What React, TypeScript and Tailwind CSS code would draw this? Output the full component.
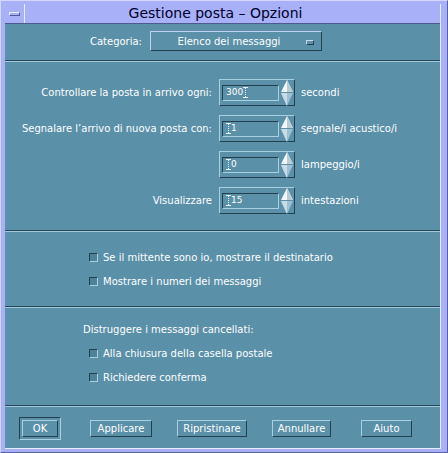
const raised = "border-t border-l border-t-[#a8d0e0] border-l-[#a8d0e0] border-b border-r border-b-[#22404e] border-r-[#22404e]";
const sunken = "border-t border-l border-t-[#22404e] border-l-[#22404e] border-b border-r border-b-[#a8d0e0] border-r-[#a8d0e0]";

const Separator = () => (
  <div className="flex flex-col">
    <div className="h-px bg-[#28485a]" />
    <div className="h-px bg-[#a0c8d8]" />
  </div>
);

const Cursor = () => (
  <span className="inline-flex flex-col items-center w-[5px] h-[11px] align-middle">
    <span className="w-[5px] h-px bg-[#f0f0f0]" />
    <span className="w-px flex-1 border-l border-dotted border-[#f0f0f0]" />
    <span className="w-[5px] h-px bg-[#f0f0f0]" />
  </span>
);

const Arrows = () => (
  <svg width="12" height="26" viewBox="0 0 12 26" className="shrink-0">
    <polygon points="6,0 12,12 0,12" fill="#f4f8fa" />
    <polygon points="6,0 12,12 6,12" fill="#b8ccd6" />
    <polygon points="0,13 12,13 6,26" fill="#9cc0d2" />
    <polygon points="0,13 6,13 6,26" fill="#c8dce6" />
  </svg>
);

const SpinRow = ({
  label,
  value,
  unit,
  cursor,
}: {
  label: string;
  value: string;
  unit: string;
  cursor: "before" | "after";
}) => (
  <div className="flex items-center h-[27px]">
    <div className="w-[207px] text-right text-white">{label}</div>
    <div className={`ml-[7px] w-[76px] h-[27px] flex items-center pl-[2px] pr-[1px] ${raised}`}>
      <div className={`w-[58px] h-[16px] flex items-center pl-[3px] text-[9px] text-white ${sunken}`}>
        {cursor === "before" && <Cursor />}
        <span>{value}</span>
        {cursor === "after" && <Cursor />}
      </div>
      <div className="ml-[2px]">
        <Arrows />
      </div>
    </div>
    <div className="ml-[6px] text-white">{unit}</div>
  </div>
);

const Check = ({ label }: { label: string }) => (
  <div className="flex items-center h-[24px] pl-[84px]">
    <div className={`w-[9px] h-[9px] bg-[#4f8299] ${sunken}`} />
    <span className="ml-[5px] text-white">{label}</span>
  </div>
);

const Btn = ({ label, w, className = "" }: { label: string; w: string; className?: string }) => (
  <div className={`${w} h-[17px] flex items-center justify-center text-white ${raised} ${className}`}>
    {label}
  </div>
);

export default function App() {
  return (
    <div
      className="w-[448px] h-[453px] bg-[#a8b0f8] border border-t-[#d4d8ff] border-l-[#d4d8ff] border-b-[#5860a0] border-r-[#5860a0] pt-[3px] pl-[4px] pr-[6px] pb-[3px] flex flex-col text-[10px]"
      style={{ fontFamily: '"DejaVu Sans", "Liberation Sans", sans-serif' }}
    >
      <div className="flex-1 flex flex-col border-r border-b border-r-[#e8ecff] border-b-[#e8ecff]">
        {/* title bar */}
        <div className="h-[20px] flex border-b border-[#505890] shrink-0">
          <div className="w-[20px] flex items-center justify-center border-r border-[#e8ecff]">
            <div className="w-[11px] h-[4px] border-t border-l border-[#eef0ff] border-b border-r border-b-[#50589a] border-r-[#50589a]" />
          </div>
          <div className="flex-1 flex items-center justify-center pr-[34px] text-[14px] text-[#000028]">
            Gestione posta – Opzioni
          </div>
        </div>

        {/* content */}
        <div className="flex-1 bg-[#5a90a8] flex flex-col">
          <div className="h-[36px] pt-[7px] flex items-start shrink-0">
            <div className="w-[137px] h-[20px] flex items-center justify-end text-white">Categoria:</div>
            <div className="ml-[8px] w-[172px] h-[20px] flex items-center border border-t-[#c4ccf8] border-l-[#c4ccf8] border-b-[#22404e] border-r-[#22404e] text-white relative">
              <span className="flex-1 text-center pr-[14px]">Elenco dei messaggi</span>
              <div className="absolute right-[7px] top-[8px] w-[8px] h-[5px] bg-[#5a90a8] border border-t-[#c8dcf0] border-l-[#c8dcf0] border-b-[#22404e] border-r-[#22404e]" />
            </div>
          </div>
          <Separator />

          <div className="h-[168px] pt-[17px] flex flex-col gap-[9px] shrink-0">
            <SpinRow label="Controllare la posta in arrivo ogni:" value="300" unit="secondi" cursor="after" />
            <SpinRow label="Segnalare l’arrivo di nuova posta con:" value="1" unit="segnale/i acustico/i" cursor="before" />
            <SpinRow label="" value="0" unit="lampeggio/i" cursor="before" />
            <SpinRow label="Visualizzare" value="15" unit="intestazioni" cursor="before" />
          </div>
          <Separator />

          <div className="h-[74px] pt-[13px] flex flex-col shrink-0">
            <Check label="Se il mittente sono io, mostrare il destinatario" />
            <Check label="Mostrare i numeri dei messaggi" />
          </div>
          <Separator />

          <div className="h-[97px] pt-[9px] flex flex-col shrink-0">
            <div className="h-[24px] flex items-center pl-[78px] text-white">
              Distruggere i messaggi cancellati:
            </div>
            <Check label="Alla chiusura della casella postale" />
            <Check label="Richiedere conferma" />
          </div>
          <Separator />

          <div className="flex-1 flex items-start pt-[10px] pl-[14px]">
            <div className={`w-[42px] h-[23px] p-[2px] ${sunken}`}>
              <Btn label="OK" w="w-[36px]" />
            </div>
            <Btn label="Applicare" w="w-[62px]" className="ml-[29px] mt-[3px]" />
            <Btn label="Ripristinare" w="w-[70px]" className="ml-[25px] mt-[3px]" />
            <Btn label="Annullare" w="w-[59px]" className="ml-[25px] mt-[3px]" />
            <Btn label="Aiuto" w="w-[51px]" className="ml-[30px] mt-[3px]" />
          </div>
        </div>
      </div>
    </div>
  );
}
